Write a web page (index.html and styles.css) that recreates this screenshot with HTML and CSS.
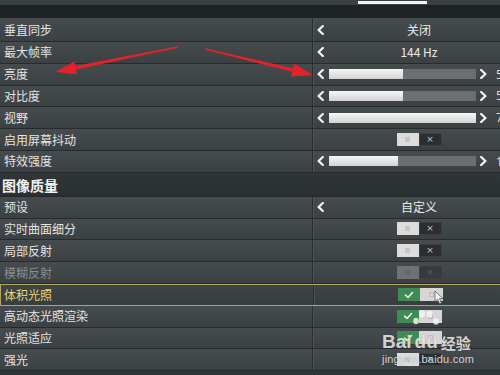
FILE: index.html
```html
<!DOCTYPE html>
<html lang="zh-CN">
<head>
<meta charset="utf-8">
<title>设置</title>
<link rel="stylesheet" href="styles.css">
</head>
<body>
<div class="screen">
  <div class="topbar"><div class="tab-indicator"></div></div>
  <div class="band"></div>
  <div class="list">
    <div class="row first">
      <div class="label">垂直同步</div>
      <div class="value">
        <svg class="chev" viewBox="0 0 7 10"><polyline points="5.8,1 1.6,5 5.8,9"/></svg>
        <div class="center">关闭</div>
      </div>
    </div>
    <div class="row">
      <div class="label">最大帧率</div>
      <div class="value">
        <svg class="chev" viewBox="0 0 7 10"><polyline points="5.8,1 1.6,5 5.8,9"/></svg>
        <div class="center">144 Hz</div>
      </div>
    </div>
    <div class="row">
      <div class="label">亮度</div>
      <div class="value">
        <svg class="chev" viewBox="0 0 7 10"><polyline points="5.8,1 1.6,5 5.8,9"/></svg>
        <div class="track"><div class="fill" style="width:50%"></div></div>
        <svg class="chev right" viewBox="0 0 7 10"><polyline points="1.2,1 5.4,5 1.2,9"/></svg>
        <span class="num">5</span>
      </div>
    </div>
    <div class="row">
      <div class="label">对比度</div>
      <div class="value">
        <svg class="chev" viewBox="0 0 7 10"><polyline points="5.8,1 1.6,5 5.8,9"/></svg>
        <div class="track"><div class="fill" style="width:50%"></div></div>
        <svg class="chev right" viewBox="0 0 7 10"><polyline points="1.2,1 5.4,5 1.2,9"/></svg>
        <span class="num">5</span>
      </div>
    </div>
    <div class="row">
      <div class="label">视野</div>
      <div class="value">
        <svg class="chev" viewBox="0 0 7 10"><polyline points="5.8,1 1.6,5 5.8,9"/></svg>
        <div class="track"><div class="fill" style="width:100%"></div></div>
        <svg class="chev right" viewBox="0 0 7 10"><polyline points="1.2,1 5.4,5 1.2,9"/></svg>
        <span class="num">7</span>
      </div>
    </div>
    <div class="row">
      <div class="label">启用屏幕抖动</div>
      <div class="value">
        <span class="chev blank"></span>
        <div class="center">
          <div class="toggle off"><span class="half a"><i class="dot"></i></span><span class="half b">×</span></div>
        </div>
      </div>
    </div>
    <div class="row">
      <div class="label">特效强度</div>
      <div class="value">
        <svg class="chev" viewBox="0 0 7 10"><polyline points="5.8,1 1.6,5 5.8,9"/></svg>
        <div class="track"><div class="fill" style="width:47%"></div></div>
        <svg class="chev right" viewBox="0 0 7 10"><polyline points="1.2,1 5.4,5 1.2,9"/></svg>
        <span class="num">1</span>
      </div>
    </div>

    <div class="section">图像质量</div>

    <div class="row">
      <div class="label">预设</div>
      <div class="value">
        <svg class="chev" viewBox="0 0 7 10"><polyline points="5.8,1 1.6,5 5.8,9"/></svg>
        <div class="center">自定义</div>
      </div>
    </div>
    <div class="row">
      <div class="label">实时曲面细分</div>
      <div class="value">
        <span class="chev blank"></span>
        <div class="center">
          <div class="toggle off"><span class="half a"><i class="dot"></i></span><span class="half b">×</span></div>
        </div>
      </div>
    </div>
    <div class="row">
      <div class="label">局部反射</div>
      <div class="value">
        <span class="chev blank"></span>
        <div class="center">
          <div class="toggle off"><span class="half a"><i class="dot"></i></span><span class="half b">×</span></div>
        </div>
      </div>
    </div>
    <div class="row disabled">
      <div class="label">模糊反射</div>
      <div class="value">
        <span class="chev blank"></span>
        <div class="center">
          <div class="toggle off"><span class="half a"><i class="dot"></i></span><span class="half b">×</span></div>
        </div>
      </div>
    </div>
    <div class="row selected">
      <div class="label">体积光照</div>
      <div class="value">
        <span class="chev blank"></span>
        <div class="center">
          <div class="toggle on"><span class="half a"><svg class="check" viewBox="0 0 10 8"><polyline points="1.5,4.2 4,6.5 8.5,1.5"/></svg></span><span class="half b"><i class="dot"></i></span></div>
        </div>
      </div>
    </div>
    <div class="row">
      <div class="label">高动态光照渲染</div>
      <div class="value">
        <span class="chev blank"></span>
        <div class="center">
          <div class="toggle on"><span class="half a"><svg class="check" viewBox="0 0 10 8"><polyline points="1.5,4.2 4,6.5 8.5,1.5"/></svg></span><span class="half b"><i class="dot"></i></span></div>
        </div>
      </div>
    </div>
    <div class="row">
      <div class="label">光照适应</div>
      <div class="value">
        <span class="chev blank"></span>
        <div class="center">
          <div class="toggle on"><span class="half a"><svg class="check" viewBox="0 0 10 8"><polyline points="1.5,4.2 4,6.5 8.5,1.5"/></svg></span><span class="half b"><i class="dot"></i></span></div>
        </div>
      </div>
    </div>
    <div class="row">
      <div class="label">强光</div>
      <div class="value">
        <span class="chev blank"></span>
        <div class="center">
          <div class="toggle off"><span class="half a"><i class="dot"></i></span><span class="half b">×</span></div>
        </div>
      </div>
    </div>
  </div>

  <svg class="arrows" viewBox="0 0 500 375" width="500" height="375">
    <polygon points="178.2,47.8 177.8,46.2 75.2,66.0 76.0,69.6"/>
    <polygon points="55,72 76.9,74.2 74.3,61.4"/>
    <polygon points="204.8,49.8 205.2,48.2 293.0,68.35 292.2,71.85"/>
    <polygon points="313,75 291.1,76.4 294.1,63.8"/>
  </svg>

  <svg class="cursor" viewBox="0 0 10 15" width="10" height="15">
    <path d="M1 1 L1 11.5 L3.6 9.2 L5.6 13.8 L7.4 13 L5.5 8.6 L9 8.6 Z"/>
  </svg>

  <div class="watermark">
    <div class="wm-logo">
      <span class="wm-latin">Bai</span>
      <span class="wm-du">
        <svg class="paw" viewBox="0 0 26 22" width="26" height="22">
          <ellipse cx="9" cy="4" rx="3" ry="3.4"/>
          <ellipse cx="16.5" cy="4" rx="3" ry="3.4"/>
          <ellipse cx="3" cy="11" rx="2.8" ry="3.2"/>
          <ellipse cx="23" cy="11.5" rx="2.8" ry="3.2"/>
        </svg>
        <span class="wm-latin">du</span>
      </span>
      <span class="wm-cjk">经验</span>
    </div>
    <div class="wm-url">jingyan.baidu.com</div>
  </div>
</div>
</body>
</html>
```

FILE: styles.css
```css
* {
  box-sizing: border-box;
  margin: 0;
  padding: 0;
}

html, body {
  width: 500px;
  height: 375px;
  overflow: hidden;
}

body {
  background: #2f3436;
  font-family: "Noto Sans CJK SC", "Noto Sans", sans-serif;
  color: #e3e3e3;
}

.screen {
  position: relative;
  width: 500px;
  height: 375px;
  overflow: hidden;
}

.topbar {
  height: 5px;
  background: #3a3f42;
  padding: 1px 0 0 358px;
}

.tab-indicator {
  width: 69px;
  height: 3px;
  background: #f2f2f2;
}

.band {
  height: 13px;
  background: #1d2225;
}

.list {
  display: flex;
  flex-direction: column;
}

.row {
  display: flex;
  flex-shrink: 0;
  height: 21.8px;
  border-bottom: 1px solid #272b2d;
  background: linear-gradient(#464b4e, #3b4043);
}

.row.first {
  height: 24px;
}

.label {
  width: 312px;
  flex-shrink: 0;
  display: flex;
  align-items: center;
  padding-left: 4px;
  font-size: 12px;
  line-height: 1;
  color: #e4e4e4;
}

.value {
  flex: 1;
  display: flex;
  align-items: center;
  min-width: 0;
  overflow: hidden;
  border-left: 1px solid #2a2e30;
  box-shadow: inset 1px 0 #4e5356;
  padding-left: 4px;
}

.chev {
  flex-shrink: 0;
  width: 7px;
  height: 10px;
  fill: none;
  stroke: #f4f4f4;
  stroke-width: 2.3;
  stroke-linecap: round;
  stroke-linejoin: round;
}

.chev.blank {
  display: block;
}

.chev.right {
  margin-left: 4px;
}

.center {
  flex-shrink: 0;
  width: 190px;
  display: flex;
  justify-content: center;
  align-items: center;
  font-size: 12px;
  line-height: 1;
  color: #ececec;
}

.track {
  flex-shrink: 0;
  width: 147px;
  height: 10px;
  margin-left: 5px;
  background: #6b6f71;
}

.fill {
  height: 100%;
  background: linear-gradient(#f6f6f6, #d2d3d3);
}

.num {
  flex-shrink: 0;
  margin-left: 9px;
  font-family: "Noto Sans", sans-serif;
  font-size: 12px;
  color: #dcdcdc;
}

.section {
  flex-shrink: 0;
  height: 24px;
  display: flex;
  align-items: center;
  padding: 2px 0 0 2px;
  background: linear-gradient(#303538, #2a2f32);
  border-bottom: 1px solid #232729;
  font-size: 14px;
  font-weight: 700;
  color: #f2f2f2;
}

.toggle {
  display: flex;
  width: 45px;
  height: 13px;
}

.half {
  display: flex;
  align-items: center;
  justify-content: center;
  height: 100%;
}

.half.a {
  width: 22px;
}

.half.b {
  width: 23px;
}

.toggle.off .a {
  background: #dcdcdc;
}

.toggle.off .b {
  background: #2a2e30;
  box-shadow: inset 0 0 0 1px #3b4043;
  font-family: "DejaVu Sans", sans-serif;
  font-size: 9px;
  line-height: 1;
  color: #c8c8c8;
}

.toggle.off .dot {
  width: 5px;
  height: 5px;
  background: #c6c6c6;
}

.toggle.on .a {
  background: #3e8c53;
}

.toggle.on .b {
  background: #d6d6d6;
}

.toggle.on .dot {
  width: 5px;
  height: 5px;
  border: 1px solid #c4b6bb;
}

.check {
  width: 10px;
  height: 8px;
  fill: none;
  stroke: #f2f2f2;
  stroke-width: 1.6;
  stroke-linecap: round;
  stroke-linejoin: round;
}

.row.disabled .label {
  color: #8a8d8f;
}

.row.disabled .toggle.off .a {
  background: #6f7274;
}

.row.disabled .toggle.off .dot {
  background: #65686a;
}

.row.disabled .toggle.off .b {
  background: #363a3c;
  color: #5f6264;
}

.row.selected {
  border-top: 1px solid #b3a564;
  border-bottom: 1px solid #b3a564;
  border-left: 1px solid #b3a564;
  background: linear-gradient(#3f4447, #373c3f);
}

.row.selected .label {
  color: #e6d57a;
  padding-left: 3px;
}

.arrows {
  position: absolute;
  left: 0;
  top: 0;
  fill: #e3232b;
  pointer-events: none;
}

.cursor {
  position: absolute;
  left: 434px;
  top: 290px;
  fill: #f4f4f4;
  stroke: #55595b;
  stroke-width: 0.8;
}

.watermark {
  position: absolute;
  left: 382px;
  top: 321px;
  color: rgba(245, 245, 245, 0.82);
  text-shadow: 0 0 1px rgba(60, 60, 60, 0.5);
}

.wm-logo {
  display: flex;
  align-items: flex-end;
  height: 30px;
}

.wm-latin {
  font-family: "Liberation Sans", Arial, sans-serif;
  font-size: 19px;
  font-weight: 700;
  line-height: 1;
}

.wm-du {
  position: relative;
  display: flex;
  align-items: flex-end;
  margin-left: 3px;
}

.paw {
  position: absolute;
  left: -2px;
  top: -22px;
  fill: rgba(245, 245, 245, 0.82);
}

.wm-cjk {
  margin-left: 3px;
  font-family: "Noto Sans CJK SC", sans-serif;
  font-size: 15px;
  font-weight: 700;
  line-height: 1;
  padding-bottom: 1px;
}

.wm-url {
  margin-top: 3px;
  font-family: "Liberation Sans", Arial, sans-serif;
  font-size: 11px;
  line-height: 1;
  letter-spacing: 0.2px;
}
```
